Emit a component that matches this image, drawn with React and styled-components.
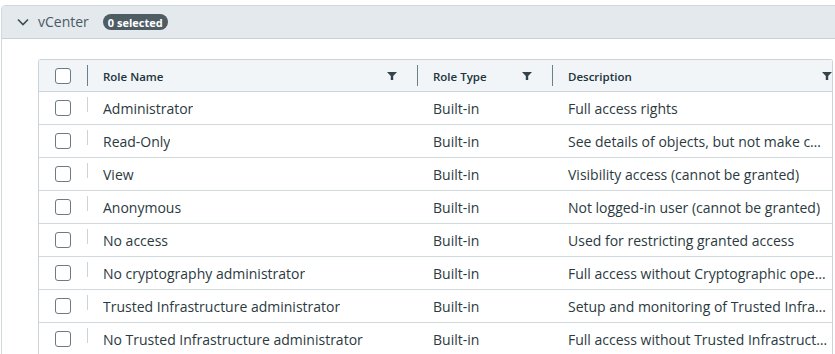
import React from "react";
import styled, { createGlobalStyle } from "styled-components";

const Global = createGlobalStyle`
  html, body { margin: 0; padding: 0; background: #fff; overflow: hidden; }
  body { font-family: "Open Sans", "Liberation Sans", sans-serif; color: #333; }
`;

const Page = styled.div`
  width: 900px;
  padding: 5px 0 0 1px;
`;

const Panel = styled.section`
  border: 1px solid #d2d9dd;
  border-radius: 4px 4px 0 0;
  width: 880px;
`;

const PanelHeader = styled.div`
  height: 32px;
  display: flex;
  align-items: center;
  background: #e3e9ec;
  border-bottom: 1px solid #c9d1d6;
  border-radius: 3px 3px 0 0;
  padding-left: 15px;
`;

const Chevron = styled.svg`
  width: 12px;
  height: 8px;
  margin-right: 9px;
`;

const Title = styled.span`
  font-size: 14px;
  color: #4a5a64;
  margin-right: 14px;
  padding-bottom: 1px;
`;

const Badge = styled.span`
  display: inline-flex;
  align-items: center;
  height: 16px;
  padding: 0 5px;
  border-radius: 8px;
  background: #4e5c64;
  color: #fff;
  font-size: 11px;
  font-weight: 700;
`;

const PanelBody = styled.div`
  padding: 20px 0 0 36px;
`;

const Table = styled.div`
  display: grid;
  grid-template-columns: 48px 330px 135px 280px;
  border: 1px solid #ccd4d9;
  border-bottom: none;
  border-radius: 3px 3px 0 0;
  width: max-content;
`;

const HeadCell = styled.div`
  position: relative;
  height: 32px;
  box-sizing: border-box;
  display: flex;
  align-items: center;
  justify-content: ${(p) => (p.$center ? "center" : "space-between")};
  padding: ${(p) => (p.$center ? "0" : `1px ${p.$last ? 0 : 20}px 0 16px`)};
  background: #f1f5f7;
  border-bottom: 1px solid #ccd4d9;
  font-size: 11.5px;
  font-weight: 600;
  color: #21333b;
  &::before {
    content: "";
    display: ${(p) => (p.$sep ? "block" : "none")};
    position: absolute;
    left: 0;
    top: 5px;
    bottom: 5px;
    width: 1px;
    background: #6f7e86;
  }
`;

const Cell = styled.div`
  position: relative;
  height: 33px;
  box-sizing: border-box;
  display: flex;
  align-items: center;
  justify-content: ${(p) => (p.$center ? "center" : "flex-start")};
  padding: ${(p) => (p.$center ? "0" : "0 3px 0 16px")};
  border-bottom: 1px solid #d3dade;
  font-size: 14px;
  color: #2b3a41;
  min-width: 0;
  &::before {
    content: "";
    display: ${(p) => (p.$sep ? "block" : "none")};
    position: absolute;
    left: 0;
    top: 5px;
    height: 15px;
    width: 1px;
    background: #ccd4d9;
  }
`;

const CellText = styled.span`
  overflow: hidden;
  white-space: nowrap;
  text-overflow: ellipsis;
`;

const Check = styled.span`
  display: block;
  width: 14px;
  height: 14px;
  border: 1px solid #6b7b84;
  border-radius: 3px;
  background: #fff;
`;

const FilterIcon = () => (
  <svg width="10" height="8" viewBox="0 0 10 8">
    <path d="M0 0h10L6.2 4v4H3.8V4z" fill="#33434b" />
  </svg>
);

const rows = [
  ["Administrator", "Built-in", "Full access rights"],
  ["Read-Only", "Built-in", "See details of objects, but not make changes"],
  ["View", "Built-in", "Visibility access (cannot be granted)"],
  ["Anonymous", "Built-in", "Not logged-in user (cannot be granted)"],
  ["No access", "Built-in", "Used for restricting granted access"],
  ["No cryptography administrator", "Built-in", "Full access without Cryptographic operations privileges"],
  ["Trusted Infrastructure administrator", "Built-in", "Setup and monitoring of Trusted Infrastructure"],
  ["No Trusted Infrastructure administrator", "Built-in", "Full access without Trusted Infrastructure privileges"],
];

export default function App() {
  return (
    <>
      <Global />
      <Page>
        <Panel>
          <PanelHeader>
            <Chevron viewBox="0 0 12 8">
              <path d="M1 1.5l5 5 5-5" fill="none" stroke="#3d4c54" strokeWidth="1.6" />
            </Chevron>
            <Title>vCenter</Title>
            <Badge>0 selected</Badge>
          </PanelHeader>
          <PanelBody>
            <Table>
              <HeadCell $center>
                <Check />
              </HeadCell>
              <HeadCell $sep>
                <span>Role Name</span>
                <FilterIcon />
              </HeadCell>
              <HeadCell $sep>
                <span>Role Type</span>
                <FilterIcon />
              </HeadCell>
              <HeadCell $sep $last>
                <span>Description</span>
                <FilterIcon />
              </HeadCell>
              {rows.map(([name, type, desc]) => (
                <React.Fragment key={name}>
                  <Cell $center>
                    <Check />
                  </Cell>
                  <Cell $sep>
                    <CellText>{name}</CellText>
                  </Cell>
                  <Cell>
                    <CellText>{type}</CellText>
                  </Cell>
                  <Cell>
                    <CellText>{desc}</CellText>
                  </Cell>
                </React.Fragment>
              ))}
            </Table>
          </PanelBody>
        </Panel>
      </Page>
    </>
  );
}
